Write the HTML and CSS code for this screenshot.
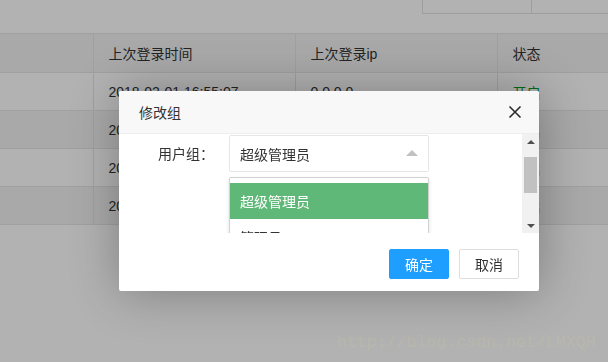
FILE: index.html
```html
<!DOCTYPE html>
<html lang="zh">
<head>
<meta charset="utf-8">
<link rel="stylesheet" href="styles.css">
</head>
<body>
<div class="topbar">
  <div class="tools"><span class="tool a"></span><span class="tool b"></span></div>
</div>
<table class="grid">
  <colgroup><col class="c1"><col class="c2"><col class="c3"><col class="c4"></colgroup>
  <thead>
    <tr><th></th><th>上次登录时间</th><th>上次登录ip</th><th>状态</th></tr>
  </thead>
  <tbody>
    <tr><td></td><td>2018-02-01 16:55:07</td><td>0.0.0.0</td><td><span class="on">开启</span></td></tr>
    <tr class="even"><td></td><td>2018-02-01 16:55:07</td><td>0.0.0.0</td><td><span class="on2">开启</span></td></tr>
    <tr><td></td><td>2018-02-01 16:55:07</td><td>0.0.0.0</td><td><span class="on2">开启</span></td></tr>
    <tr class="even"><td></td><td>2018-02-01 16:55:07</td><td>0.0.0.0</td><td><span class="on2">开启</span></td></tr>
  </tbody>
</table>

<div class="shade"></div>
<div class="watermark">http://blog.csdn.net/LMXQH</div>

<div class="layer">
  <div class="layer-head">
    <span class="layer-title">修改组</span>
    <svg class="close" width="14" height="14" viewBox="0 0 14 14"><path d="M1.5 1.5 L12.5 12.5 M12.5 1.5 L1.5 12.5" stroke="#2b2b2b" stroke-width="1.6" fill="none"/></svg>
  </div>
  <div class="layer-body">
    <div class="content">
      <div class="form-item">
        <label class="form-label">用户组：</label>
        <div class="select-wrap">
          <div class="select">
            <span>超级管理员</span>
            <i class="arrow"></i>
          </div>
          <div class="dropdown">
            <div class="opt active">超级管理员</div>
            <div class="opt">管理员</div>
          </div>
        </div>
      </div>
    </div>
    <div class="scrollbar">
      <div class="sb-btn"><i class="tri-up"></i></div>
      <div class="sb-track">
        <div class="sb-thumb"></div>
      </div>
      <div class="sb-btn"><i class="tri-down"></i></div>
    </div>
  </div>
  <div class="layer-foot">
    <button class="btn primary">确定</button>
    <button class="btn">取消</button>
  </div>
</div>
</body>
</html>
```

FILE: styles.css
```css
* { box-sizing: border-box; }
html, body { margin: 0; padding: 0; }
body {
  width: 608px;
  height: 362px;
  overflow: hidden;
  background: #fff;
  font-family: "Liberation Sans", "Noto Sans CJK SC", sans-serif;
  font-size: 14px;
  color: #333;
}

.topbar {
  height: 33px;
  display: flex;
  justify-content: flex-end;
}
.tools {
  display: flex;
  width: 186px;
  height: 14px;
}
.tool {
  height: 14px;
  border-bottom: 1px solid #e2e2e2;
  border-left: 1px solid #e2e2e2;
}
.tool.a { width: 109px; }
.tool.b { flex: 1; }

.grid {
  border-collapse: collapse;
  table-layout: fixed;
  width: 608px;
}
.c1 { width: 93px; }
.c2 { width: 202px; }
.c3 { width: 202px; }
.c4 { width: 111px; }
.grid th, .grid td {
  border: 1px solid #e6e6e6;
  padding: 0 15px;
  text-align: left;
  font-weight: normal;
  color: #333;
  white-space: nowrap;
  overflow: hidden;
}
.grid th:first-child, .grid td:first-child { border-left: none; }
.grid th:last-child, .grid td:last-child { border-right: none; }
.grid thead tr { height: 39px; background: #f2f2f2; }
.grid tbody tr { height: 38px; }
.grid tbody tr.even { background: #f2f2f2; }
.on { color: #009e20; }
.on2 { color: #00827a; }

.shade {
  position: fixed;
  inset: 0;
  background: rgba(0,0,0,0.3);
}

.watermark {
  position: fixed;
  left: 337px;
  top: 332px;
  font-family: "Liberation Mono", monospace;
  font-size: 16.6px;
  line-height: 22px;
  color: rgba(200, 200, 150, 0.22);
}

.layer {
  position: fixed;
  left: 119px;
  top: 91px;
  width: 420px;
  height: 200px;
  background: #fff;
  border-radius: 2px;
  box-shadow: 1px 1px 50px rgba(0,0,0,0.3);
  display: flex;
  flex-direction: column;
}
.layer-head {
  height: 43px;
  flex: none;
  background: #f8f8f8;
  border-bottom: 1px solid #eee;
  border-radius: 2px 2px 0 0;
  display: flex;
  align-items: center;
  justify-content: space-between;
  padding: 0 17px 0 20px;
  font-family: "Noto Sans CJK SC", sans-serif;
  font-size: 14px;
  color: #333;
}
.close { display: block; }

.layer-body {
  height: 99px;
  flex: none;
  display: flex;
  overflow: hidden;
}
.content {
  flex: 1;
  overflow: hidden;
  padding-top: 1px;
}
.form-item {
  display: flex;
  align-items: flex-start;
}
.form-label {
  width: 110px;
  flex: none;
  text-align: right;
  padding-right: 15px;
  line-height: 37px;
  font-family: "Noto Sans CJK SC", sans-serif;
  color: #333;
}
.select-wrap { width: 200px; }
.select {
  height: 37px;
  border: 1px solid #e6e6e6;
  border-radius: 2px;
  padding: 0 10px;
  display: flex;
  align-items: center;
  justify-content: space-between;
  font-family: "Noto Sans CJK SC", sans-serif;
  color: #333;
}
.arrow {
  width: 0;
  height: 0;
  border-left: 6px solid transparent;
  border-right: 6px solid transparent;
  border-bottom: 6px solid #c2c2c2;
  margin-top: -1px;
}
.dropdown {
  margin-top: 5px;
  border: 1px solid #d2d2d2;
  border-radius: 2px;
  padding: 5px 0;
  background: #fff;
  box-shadow: 0 2px 4px rgba(0,0,0,0.12);
  font-family: "Noto Sans CJK SC", sans-serif;
}
.opt {
  height: 36px;
  line-height: 36px;
  padding: 0 10px;
  color: #333;
}
.opt.active { background: #5fb878; color: #fff; }

.scrollbar {
  width: 17px;
  flex: none;
  background: #f1f1f1;
  display: flex;
  flex-direction: column;
}
.sb-btn {
  height: 17px;
  flex: none;
  display: flex;
  align-items: center;
  justify-content: center;
}
.tri-up, .tri-down {
  width: 0; height: 0;
  border-left: 4px solid transparent;
  border-right: 4px solid transparent;
}
.tri-up { border-bottom: 4px solid #505050; margin-top: -2px; }
.tri-down { border-top: 4px solid #505050; margin-top: 2px; }
.sb-track {
  flex: 1;
  padding: 6px 2px 0;
}
.sb-thumb {
  height: 36px;
  background: #c1c1c1;
}

.layer-foot {
  flex: 1;
  display: flex;
  justify-content: flex-end;
  gap: 10px;
  padding: 16px 20px 0;
}
.btn {
  height: 30px;
  width: 60px;
  border: 1px solid #dedede;
  border-radius: 2px;
  background: #fff;
  color: #333;
  font-family: "Noto Sans CJK SC", sans-serif;
  font-size: 14px;
  padding: 0;
  line-height: 28px;
}
.btn.primary {
  background: #1e9fff;
  border-color: #1e9fff;
  color: #fff;
}
```
